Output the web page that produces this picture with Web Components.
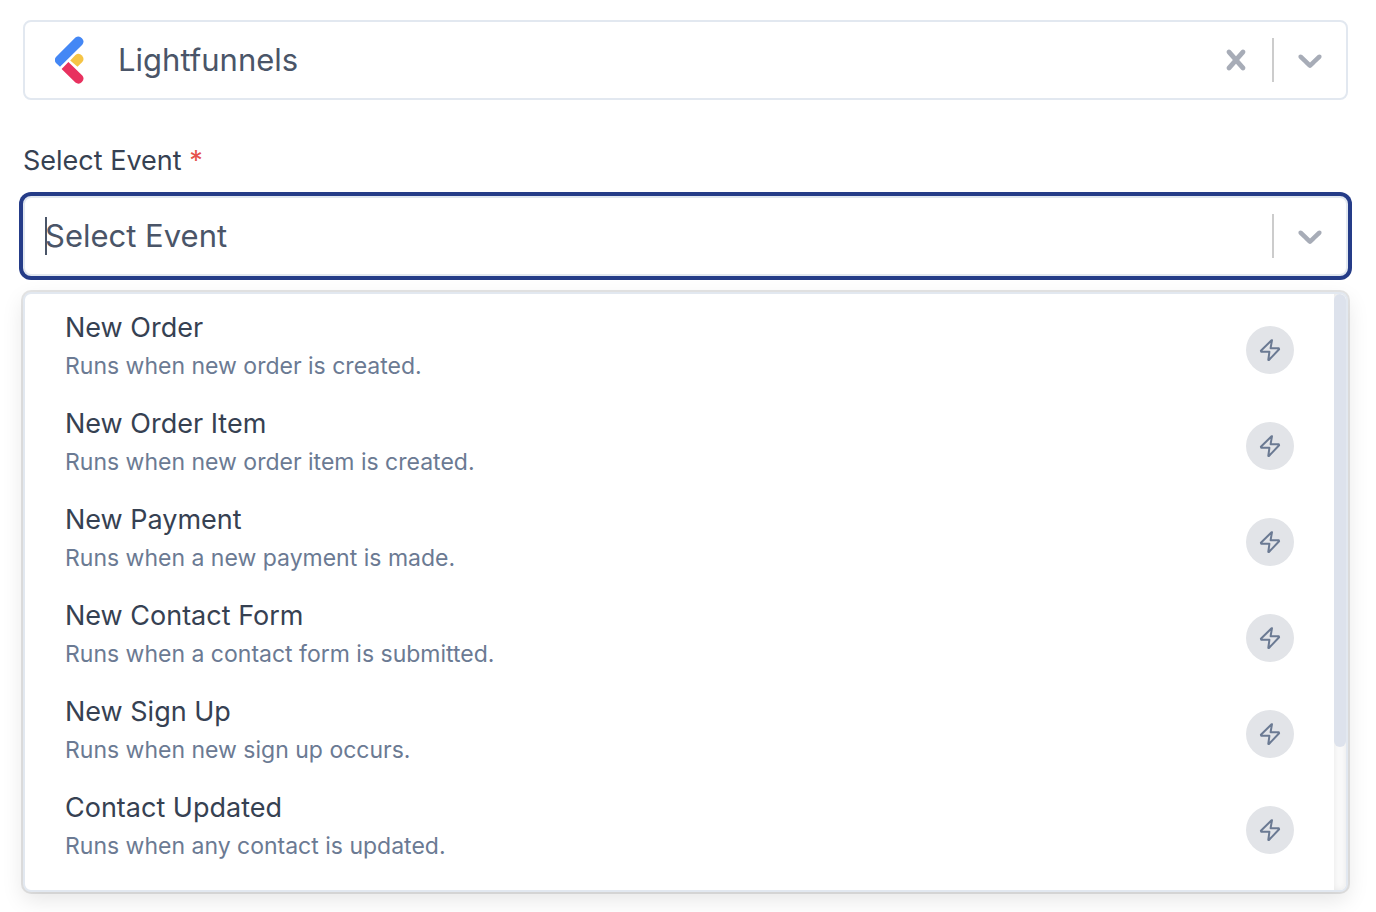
<!DOCTYPE html>
<html lang="en">
<head>
<meta charset="utf-8">
<meta name="viewport" content="width=device-width, initial-scale=1">
<title>Select Event</title>
<style>
    :root {
        --border-color: #e2e8f0;
        --focus-color: #253c88;
        --value-color: #4a5568;
        --title-color: #364152;
        --muted-color: #6b7a93;
        --icon-color: #a7acb7;
    }
    body {
        margin: 0;
        padding: 20px 28px 20px 23px;
        background: #fff;
        color: var(--title-color);
        font-family: Inter, "Noto Sans", sans-serif;
    }
</style>
</head>
<body>
<event-form></event-form>

<script>
const events = [
    { title: "New Order", description: "Runs when new order is created." },
    { title: "New Order Item", description: "Runs when new order item is created." },
    { title: "New Payment", description: "Runs when a new payment is made." },
    { title: "New Contact Form", description: "Runs when a contact form is submitted." },
    { title: "New Sign Up", description: "Runs when new sign up occurs." },
    { title: "Contact Updated", description: "Runs when any contact is updated." }
];

class AppLogo extends HTMLElement {
    constructor() {
        super();
        this.attachShadow({ mode: 'open' });
    }

    connectedCallback() {
        this.shadowRoot.innerHTML = `
            <style>
                :host { display: block; flex: none; }
                svg { display: block; }
            </style>
            <svg width="29" height="48" viewBox="0 0 29 48" aria-hidden="true">
                <path fill="#4487f5" d="M20.4 1.6a5 5 0 0 1 6.9 7.1L5 30.7 1.2 27.2a4.6 4.6 0 0 1 0-6.5z"/>
                <path fill="#f5c445" d="M15.2 24.4 20.4 19a5 5 0 0 1 6.9 7.1l-4.8 4.7z"/>
                <path fill="#e8315f" d="M6.6 33l6.8-7 13.9 13.4a5 5 0 0 1-6.9 7.1z"/>
            </svg>
        `;
    }
}

// Bordered box with the value on the left and the indicators on the right
class SelectControl extends HTMLElement {
    constructor() {
        super();
        this.attachShadow({ mode: 'open' });
    }

    connectedCallback() {
        const clear = this.hasAttribute('clearable') ? `
            <button type="button" aria-label="Clear">
                <svg width="40" height="40" viewBox="0 0 20 20"><path d="M14.348 14.849c-0.469 0.469-1.229 0.469-1.697 0l-2.651-3.030-2.651 3.029c-0.469 0.469-1.229 0.469-1.697 0-0.469-0.469-0.469-1.229 0-1.697l2.758-3.15-2.759-3.152c-0.469-0.469-0.469-1.228 0-1.697s1.228-0.469 1.697 0l2.652 3.031 2.651-3.031c0.469-0.469 1.228-0.469 1.697 0s0.469 1.229 0 1.697l-2.758 3.152 2.758 3.15c0.469 0.469 0.469 1.229 0 1.698z"/></svg>
            </button>` : '';

        this.shadowRoot.innerHTML = `
            <style>
                :host {
                    display: flex;
                    align-items: stretch;
                    box-sizing: border-box;
                    min-height: 80px;
                    border: 2px solid var(--border-color);
                    border-radius: 8px;
                    background: #fff;
                    color: var(--value-color);
                    font-size: 31px;
                    line-height: 40px;
                }
                :host([focused]) {
                    box-shadow: 0 0 0 4px var(--focus-color);
                }
                .value {
                    flex: 1;
                    min-width: 0;
                    display: flex;
                    align-items: center;
                    padding: 0 20px;
                }
                .separator {
                    width: 2px;
                    margin: 16px 0;
                    background: #ccc;
                }
                button {
                    display: flex;
                    align-items: center;
                    padding: 16px;
                    border: 0;
                    background: none;
                    color: var(--icon-color);
                    cursor: pointer;
                }
                svg {
                    display: block;
                    fill: currentColor;
                }
            </style>
            <div class="value"><slot></slot></div>
            ${clear}
            <span class="separator"></span>
            <button type="button" aria-label="Open menu">
                <svg width="40" height="40" viewBox="0 0 20 20"><path d="M4.516 7.548c0.436-0.446 1.043-0.481 1.576 0l3.908 3.747 3.908-3.747c0.533-0.481 1.141-0.446 1.574 0 0.436 0.445 0.408 1.197 0 1.615-0.406 0.418-4.695 4.502-4.695 4.502-0.217 0.223-0.502 0.335-0.787 0.335s-0.57-0.112-0.789-0.335c0 0-4.287-4.084-4.695-4.502s-0.436-1.17 0-1.615z"/></svg>
            </button>
        `;
    }
}

class EventOption extends HTMLElement {
    constructor() {
        super();
        this.attachShadow({ mode: 'open' });
    }

    connectedCallback() {
        this.shadowRoot.innerHTML = `
            <style>
                :host { display: block; }
                button {
                    display: flex;
                    align-items: center;
                    justify-content: space-between;
                    box-sizing: border-box;
                    width: 100%;
                    height: 96px;
                    padding: 0 40px;
                    border: 0;
                    background: none;
                    color: var(--title-color);
                    font: inherit;
                    text-align: left;
                    cursor: pointer;
                }
                .text {
                    display: flex;
                    flex-direction: column;
                    padding-bottom: 8px;
                }
                .title {
                    font-size: 27px;
                    line-height: 40px;
                }
                .description {
                    color: var(--muted-color);
                    font-size: 23px;
                    line-height: 36px;
                }
                .badge {
                    display: flex;
                    align-items: center;
                    justify-content: center;
                    flex: none;
                    width: 48px;
                    height: 48px;
                    border-radius: 50%;
                    background: #e2e4e8;
                    color: var(--muted-color);
                }
            </style>
            <button type="button" role="option">
                <span class="text">
                    <span class="title"><slot name="title"></slot></span>
                    <span class="description"><slot name="description"></slot></span>
                </span>
                <span class="badge">
                    <svg width="24" height="24" viewBox="0 0 24 24" fill="none" stroke="currentColor" stroke-width="2" stroke-linecap="round" stroke-linejoin="round" aria-hidden="true"><path d="M13.6 2.2 2.9 12.8l.3 1h8.2L10.3 22h.6L21.1 11.2l-.3-1h-8.2l1.4-8z"/></svg>
                </span>
            </button>
        `;
    }
}

class EventMenu extends HTMLElement {
    constructor() {
        super();
        this.attachShadow({ mode: 'open' });
    }

    connectedCallback() {
        this.shadowRoot.innerHTML = `
            <style>
                :host {
                    display: flex;
                    border: 2px solid var(--border-color);
                    border-radius: 8px;
                    background: #fff;
                    box-shadow: 0 0 0 2px rgba(0, 0, 0, .1), 0 8px 22px rgba(0, 0, 0, .1);
                    overflow: hidden;
                }
                .list {
                    flex: 1;
                    min-width: 0;
                    padding: 8px 0 12px;
                }
                .track {
                    flex: none;
                    width: 12px;
                    background: #fafafa;
                    box-shadow: inset 0 0 6px rgba(0, 0, 0, .08);
                }
                .thumb {
                    height: 76%;
                    border-radius: 6px;
                    background: #dde2ec;
                }
            </style>
            <div class="list" role="listbox" aria-label="Events"><slot></slot></div>
            <div class="track"><div class="thumb"></div></div>
        `;
    }
}

class EventForm extends HTMLElement {
    constructor() {
        super();
        this.attachShadow({ mode: 'open' });
    }

    connectedCallback() {
        const options = events.map(event => `
            <event-option>
                <span slot="title">${event.title}</span>
                <span slot="description">${event.description}</span>
            </event-option>`).join('');

        this.shadowRoot.innerHTML = `
            <style>
                :host { display: block; }
                .app {
                    display: flex;
                    align-items: center;
                    gap: 34px;
                    padding-left: 10px;
                }
                label {
                    display: block;
                    margin: 41px 0 15px;
                    font-size: 27px;
                    line-height: 40px;
                }
                .required {
                    color: #e5534b;
                }
                .field {
                    position: relative;
                    flex: 1;
                    display: flex;
                }
                input {
                    flex: 1;
                    min-width: 0;
                    padding: 0;
                    border: 0;
                    outline: 0;
                    background: none;
                    color: inherit;
                    font: inherit;
                    caret-color: transparent;
                }
                input::placeholder {
                    color: var(--value-color);
                    opacity: 1;
                }
                .caret {
                    position: absolute;
                    top: 1px;
                    left: 0;
                    width: 2px;
                    height: 38px;
                    background: var(--value-color);
                }
                event-menu {
                    margin-top: 16px;
                }
            </style>
            <select-control clearable>
                <div class="app"><app-logo></app-logo><span>Lightfunnels</span></div>
            </select-control>
            <label for="event">Select Event <span class="required">*</span></label>
            <select-control focused>
                <div class="field">
                    <input id="event" type="text" placeholder="Select Event" autocomplete="off">
                    <span class="caret"></span>
                </div>
            </select-control>
            <event-menu>${options}</event-menu>
        `;
    }
}

customElements.define('app-logo', AppLogo);
customElements.define('select-control', SelectControl);
customElements.define('event-option', EventOption);
customElements.define('event-menu', EventMenu);
customElements.define('event-form', EventForm);
</script>
</body>
</html>
